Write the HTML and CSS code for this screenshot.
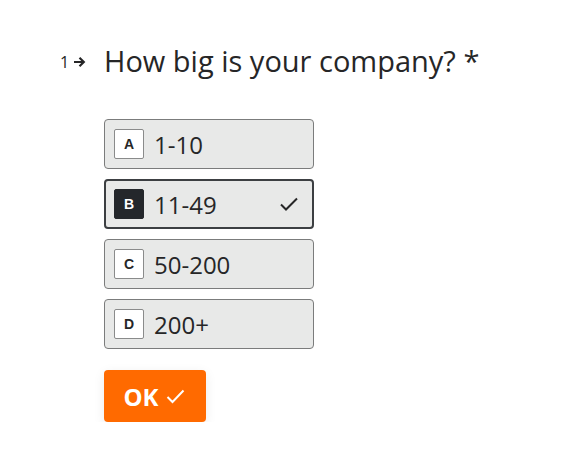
FILE: index.html
```html
<!DOCTYPE html>
<html>
<head>
<meta charset="utf-8">
<link rel="stylesheet" href="styles.css">
</head>
<body>
<main class="form">
  <div class="question">
    <div class="qnum"><span class="num">1</span><svg class="arrow" width="13" height="12" viewBox="0 0 13 12"><path d="M1 6h10M6.5 1.8L10.8 6l-4.3 4.2" fill="none" stroke="#262627" stroke-width="2.2"/></svg></div>
    <h1 class="qtext">How big is your company? *</h1>
  </div>
  <div class="options">
    <div class="option"><span class="key">A</span><span class="label">1-10</span></div>
    <div class="option selected"><span class="key">B</span><span class="label">11-49</span><svg class="tick" width="20" height="16" viewBox="0 0 20 16"><path d="M2 8.5l5 5L18 2.5" fill="none" stroke="#262627" stroke-width="2"/></svg></div>
    <div class="option"><span class="key">C</span><span class="label">50-200</span></div>
    <div class="option"><span class="key">D</span><span class="label">200+</span></div>
  </div>
  <button class="ok">OK <svg width="19" height="15" viewBox="0 0 19 15"><path d="M1.5 8l5 5L17.5 1.5" fill="none" stroke="#fff" stroke-width="2"/></svg></button>
</main>
</body>
</html>
```
FILE: styles.css
```css
html, body { margin: 0; background: #fff; }
body { font-family: "Open Sans", "Noto Sans", sans-serif; color: #262627; }
.form { padding: 40px 0 0 60px; }
.question { display: flex; align-items: center; height: 42px; }
.qnum { width: 44px; display: flex; align-items: center; gap: 4px; font-size: 16px; padding-top: 2px; }
.arrow { display: block; }
.qtext { margin: 0; font-weight: 400; font-size: 29px; line-height: 42px; }
.options { display: flex; flex-direction: column; gap: 10px; margin: 37px 0 0 44px; width: 210px; }
.option { box-sizing: border-box; height: 50px; border: 1px solid #7b7c7c; border-radius: 4px; background: #e8e9e8; display: flex; align-items: center; padding: 0 10px 0 9px; }
.option.selected { border: 2px solid #3c3f42; padding: 0 9px 0 8px; }
.key { box-sizing: border-box; width: 30px; height: 30px; border: 1px solid #8a8b8b; background: #fff; border-radius: 2px; display: flex; align-items: center; justify-content: center; font-size: 14px; font-weight: 700; font-family: "Liberation Sans", Arial, sans-serif; color: #262627; }
.selected .key { background: #24272b; border-color: #24272b; color: #fff; }
.label { margin-left: 10px; font-size: 24px; flex: 1; }
.tick { margin-right: 4px; }
.ok { margin: 21px 0 0 44px; width: 102px; height: 52px; border: 0; border-radius: 4px; background: #ff6a00; color: #fff; font-family: "Open Sans", sans-serif; font-weight: 700; font-size: 24px; display: flex; align-items: center; justify-content: center; gap: 7px; padding: 0 2px 0 0; box-shadow: 0 3px 12px rgba(0,0,0,0.08); }
```
